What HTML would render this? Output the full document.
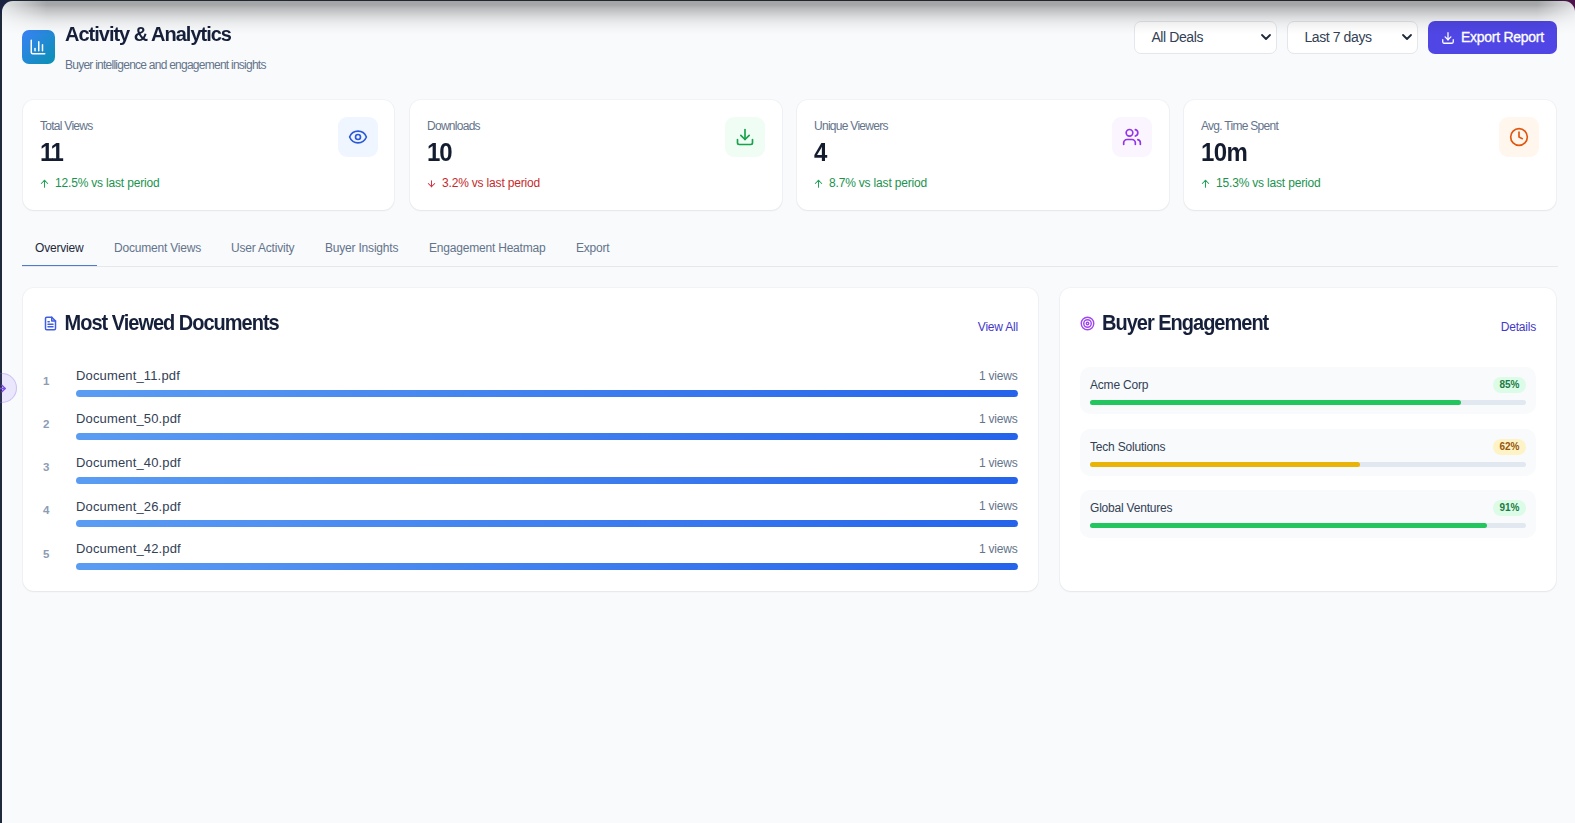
<!DOCTYPE html>
<html lang="en">
<head>
<meta charset="utf-8">
<title>Activity &amp; Analytics</title>
<style>
*{box-sizing:border-box;margin:0;padding:0}
html,body{width:1575px;height:823px;overflow:hidden}
body{font-family:"Liberation Sans",Arial,sans-serif;background:#1e2a3a;color:#1e293b;position:relative}
#topbar{position:absolute;left:0;top:0;width:1575px;height:14px;background:linear-gradient(90deg,#1a2142 0,#1e2835 30px,#22272f 300px,#222528 1545px,#3a1a3c 1560px,#4b1348 1570px)}
.abs{position:absolute}
#app{position:absolute;left:2px;top:1px;width:1573px;height:822px;background:#f8fafc;border-radius:11px 11px 0 0;overflow:hidden}
#topshadow{position:absolute;left:0;top:0;width:100%;height:34px;background:linear-gradient(180deg,rgba(0,0,0,.34) 0,rgba(0,0,0,.33) 4px,rgba(0,0,0,.26) 7px,rgba(0,0,0,.20) 11px,rgba(0,0,0,.137) 15px,rgba(0,0,0,.085) 19px,rgba(0,0,0,.052) 23px,rgba(0,0,0,.028) 27px,rgba(0,0,0,.012) 30px,rgba(0,0,0,0) 34px);-webkit-mask-image:linear-gradient(90deg,rgba(0,0,0,.25) 0,#000 45px,#000 1535px,rgba(0,0,0,.3) 1573px);mask-image:linear-gradient(90deg,rgba(0,0,0,.25) 0,#000 45px,#000 1535px,rgba(0,0,0,.3) 1573px)}
/* all children positioned relative to page (0,0) via wrapper offset */
#pg{position:absolute;left:-2px;top:-1px;width:1575px;height:823px}
.hicon{left:22px;top:30px;width:33px;height:34px;border-radius:7px;background:linear-gradient(135deg,#3b82f6,#0891b2)}
h1{left:65px;top:22px;font-size:20px;line-height:24px;font-weight:700;letter-spacing:-1px;color:#17203a;white-space:nowrap;transform:scaleY(1.05);transform-origin:0 18.9px}
.sub{left:65px;top:57px;font-size:12px;line-height:16px;letter-spacing:-0.75px;color:#64748b;white-space:nowrap}
.sel{top:21px;height:33px;border:1px solid #e3e6ea;border-radius:7px;background:#fff;font-size:14px;line-height:31px;color:#334155;padding-left:16.4px;white-space:nowrap;letter-spacing:-0.4px}
.sel svg{position:absolute;right:4px;top:9.4px}
.btn{left:1428px;top:21px;width:129px;height:33px;border-radius:7px;background:#4f46e5;color:#fff;font-size:14px;line-height:33px;font-weight:400;white-space:nowrap;-webkit-text-stroke:0.3px #fff}
.btn span{position:absolute;left:33px;top:0;letter-spacing:-0.27px}
.btn svg{position:absolute;left:12.5px;top:9.5px}
.card{top:100px;width:372px;height:109.5px;background:#fff;border-radius:11px;box-shadow:0 1px 2px rgba(0,0,0,.055),0 0 0 1px rgba(241,243,246,1)}
.card .lb{position:absolute;left:17px;top:18px;font-size:12px;line-height:16px;letter-spacing:-0.72px;color:#64748b;white-space:nowrap}
.card .val{position:absolute;left:17px;top:38px;font-size:24px;line-height:30px;font-weight:700;color:#141c30;letter-spacing:-1.4px;white-space:nowrap;transform:scaleY(1.04);transform-origin:0 23.3px}
.card .chg{position:absolute;left:17px;top:75px;font-size:12px;line-height:16px;white-space:nowrap;letter-spacing:-0.18px}
.card .chg svg{position:absolute;left:-0.6px;top:3px}
.card .chg span{position:absolute;left:15px;top:0}
.up{color:#1a934e}.dn{color:#c52a2a}
.ib{position:absolute;left:315px;top:17px;width:40px;height:40px;border-radius:9px}
.ib svg{position:absolute;left:10px;top:10px}
.tab{top:240px;font-size:12px;line-height:16px;color:#64748b;white-space:nowrap;letter-spacing:-0.2px}
.tab.on{color:#1e293b}
.tline{left:22px;top:266px;width:1536px;height:1px;background:#e6e8eb}
.tact{left:22px;top:265px;width:75px;height:1px;background:#4f7bd0}
.panel{top:288px;height:303px;background:#fff;border-radius:11px;box-shadow:0 1px 2px rgba(0,0,0,.055),0 0 0 1px rgba(241,243,246,1)}
h2{position:absolute;font-size:20px;line-height:24px;font-weight:700;letter-spacing:-1px;color:#17203a;white-space:nowrap;transform:scaleY(1.06);transform-origin:0 18.9px}
.lnk{position:absolute;font-size:12px;line-height:16px;color:#4338ca;white-space:nowrap;letter-spacing:-0.2px}
.row{position:absolute;left:0;width:1015px;height:43px}
.row .n{position:absolute;left:20px;top:6.5px;font-size:11.5px;line-height:14px;font-weight:700;color:#8d9cb4}
.row .nm{position:absolute;left:53px;top:0;font-size:13px;line-height:18px;color:#334155;letter-spacing:0.15px;white-space:nowrap}
.row .vw{position:absolute;right:20.5px;top:1px;font-size:12px;line-height:16px;color:#64748b;white-space:nowrap;letter-spacing:-0.2px}
.row .bar{position:absolute;left:53px;top:23px;width:942px;height:7px;border-radius:4px;background:linear-gradient(90deg,#5b9cf3,#2563eb)}
.be{position:absolute;left:20px;width:456px;height:47px;border-radius:10px;background:#f8fafc}
.be .nm{position:absolute;left:10px;top:10px;font-size:12px;line-height:16px;color:#334155;white-space:nowrap;letter-spacing:-0.2px}
.be .pill{position:absolute;right:10px;top:10px;width:33px;height:16px;border-radius:8px;font-size:10px;line-height:16px;font-weight:700;text-align:center}
.be .trk{position:absolute;left:10px;top:33px;width:436px;height:5px;border-radius:3px;background:#e2e8f0}
.be .fill{position:absolute;left:0;top:0;height:5px;border-radius:3px}
.g{background:#dcfce7;color:#1c7a45}.y{background:#fef3c7;color:#95580f}
.side{left:-13px;top:373px;width:30px;height:30px;border-radius:50%;background:rgba(139,92,246,.12);border:1px solid rgba(125,100,225,.30)}
</style>
</head>
<body>
<div id="topbar"></div>
<div id="app"><div id="pg">

<div class="abs hicon">
<svg class="abs" style="left:7.2px;top:8px" width="18" height="18" viewBox="0 0 24 24" fill="none" stroke="#fff" stroke-width="2" stroke-linecap="round" stroke-linejoin="round"><path d="M3 3v16a2 2 0 0 0 2 2h16"/><path d="M18 17V9"/><path d="M13 17V5"/><path d="M8 17v-3"/></svg>
</div>
<h1 class="abs">Activity &amp; Analytics</h1>
<div class="abs sub">Buyer intelligence and engagement insights</div>

<div class="abs sel" style="left:1134px;width:143px">All Deals<svg width="12" height="12" viewBox="0 0 12 12" fill="none" stroke="#1e293b" stroke-width="1.8" stroke-linecap="round" stroke-linejoin="round"><path d="M2 4l4 4 4-4"/></svg></div>
<div class="abs sel" style="left:1287px;width:131px">Last 7 days<svg width="12" height="12" viewBox="0 0 12 12" fill="none" stroke="#1e293b" stroke-width="1.8" stroke-linecap="round" stroke-linejoin="round"><path d="M2 4l4 4 4-4"/></svg></div>
<div class="abs btn"><svg width="14" height="14" viewBox="0 0 24 24" fill="none" stroke="#fff" stroke-width="2.2" stroke-linecap="round" stroke-linejoin="round"><path d="M21 15v4a2 2 0 0 1-2 2H5a2 2 0 0 1-2-2v-4"/><path d="M7 10l5 5 5-5"/><path d="M12 15V3"/></svg><span>Export Report</span></div>

<!-- stat cards -->
<div class="abs card" style="left:23px;width:371px">
 <div class="lb">Total Views</div><div class="val">11</div>
 <div class="chg up"><svg width="11" height="11" viewBox="0 0 24 24" fill="none" stroke="#22a35a" stroke-width="2.2" stroke-linecap="round" stroke-linejoin="round"><path d="M12 20V5"/><path d="M5 12l7-7 7 7"/></svg><span>12.5% vs last period</span></div>
 <div class="ib" style="background:#eff6ff"><svg width="20" height="20" viewBox="0 0 24 24" fill="none" stroke="#2a5ad8" stroke-width="2" stroke-linecap="round" stroke-linejoin="round"><path d="M2.062 12.348a1 1 0 0 1 0-.696 10.750 10.750 0 0 1 19.876 0 1 1 0 0 1 0 .696 10.750 10.750 0 0 1-19.876 0"/><circle cx="12" cy="12" r="3"/></svg></div>
</div>
<div class="abs card" style="left:410px">
 <div class="lb">Downloads</div><div class="val" style="letter-spacing:-1.1px">10</div>
 <div class="chg dn"><svg width="11" height="11" viewBox="0 0 24 24" fill="none" stroke="#d03545" stroke-width="2.2" stroke-linecap="round" stroke-linejoin="round"><path d="M12 6v13"/><path d="M19 12l-7 7-7-7"/></svg><span>3.2% vs last period</span></div>
 <div class="ib" style="background:#f0fdf4"><svg width="20" height="20" viewBox="0 0 24 24" fill="none" stroke="#16a34a" stroke-width="2" stroke-linecap="round" stroke-linejoin="round"><path d="M21 15v4a2 2 0 0 1-2 2H5a2 2 0 0 1-2-2v-4"/><path d="M7 10l5 5 5-5"/><path d="M12 15V3"/></svg></div>
</div>
<div class="abs card" style="left:797px">
 <div class="lb">Unique Viewers</div><div class="val">4</div>
 <div class="chg up"><svg width="11" height="11" viewBox="0 0 24 24" fill="none" stroke="#22a35a" stroke-width="2.2" stroke-linecap="round" stroke-linejoin="round"><path d="M12 20V5"/><path d="M5 12l7-7 7 7"/></svg><span>8.7% vs last period</span></div>
 <div class="ib" style="background:#faf5ff"><svg width="20" height="20" viewBox="0 0 24 24" fill="none" stroke="#9333ea" stroke-width="2" stroke-linecap="round" stroke-linejoin="round"><path d="M16 21v-2a4 4 0 0 0-4-4H6a4 4 0 0 0-4 4v2"/><circle cx="9" cy="7" r="4"/><path d="M22 21v-2a4 4 0 0 0-3-3.870"/><path d="M16 3.130a4 4 0 0 1 0 7.750"/></svg></div>
</div>
<div class="abs card" style="left:1184px">
 <div class="lb">Avg. Time Spent</div><div class="val" style="letter-spacing:-0.65px">10m</div>
 <div class="chg up"><svg width="11" height="11" viewBox="0 0 24 24" fill="none" stroke="#22a35a" stroke-width="2.2" stroke-linecap="round" stroke-linejoin="round"><path d="M12 20V5"/><path d="M5 12l7-7 7 7"/></svg><span>15.3% vs last period</span></div>
 <div class="ib" style="background:#fff7ed"><svg width="20" height="20" viewBox="0 0 24 24" fill="none" stroke="#e2560e" stroke-width="2" stroke-linecap="round" stroke-linejoin="round"><circle cx="12" cy="12" r="10"/><path d="M12 6v6l4 2"/></svg></div>
</div>

<!-- tabs -->
<div class="abs tab on" style="left:35px">Overview</div>
<div class="abs tab" style="left:114px">Document Views</div>
<div class="abs tab" style="left:231px">User Activity</div>
<div class="abs tab" style="left:325px">Buyer Insights</div>
<div class="abs tab" style="left:429px">Engagement Heatmap</div>
<div class="abs tab" style="left:576px">Export</div>
<div class="abs tline"></div>
<div class="abs tact"></div>

<!-- left panel -->
<div class="abs panel" style="left:23px;width:1015px">
 <svg class="abs" style="left:20px;top:27.5px" width="15" height="15" viewBox="0 0 24 24" fill="none" stroke="#3f5fe0" stroke-width="2.4" stroke-linecap="round" stroke-linejoin="round"><path d="M14 2H6a2 2 0 0 0-2 2v16a2 2 0 0 0 2 2h12a2 2 0 0 0 2-2V8z"/><path d="M14 2v6h6"/><path d="M16 13H8"/><path d="M16 17H8"/><path d="M10 9H8"/></svg>
 <h2 style="left:41.5px;top:23px">Most Viewed Documents</h2>
 <div class="lnk" style="right:20px;top:31px">View All</div>
 <div class="row" style="top:79px"><div class="n">1</div><div class="nm">Document_11.pdf</div><div class="vw">1 views</div><div class="bar"></div></div>
 <div class="row" style="top:122.2px"><div class="n">2</div><div class="nm">Document_50.pdf</div><div class="vw">1 views</div><div class="bar"></div></div>
 <div class="row" style="top:165.5px"><div class="n">3</div><div class="nm">Document_40.pdf</div><div class="vw">1 views</div><div class="bar"></div></div>
 <div class="row" style="top:208.8px"><div class="n">4</div><div class="nm" style="top:1px">Document_26.pdf</div><div class="vw">1 views</div><div class="bar"></div></div>
 <div class="row" style="top:252px"><div class="n">5</div><div class="nm">Document_42.pdf</div><div class="vw">1 views</div><div class="bar"></div></div>
</div>

<!-- right panel -->
<div class="abs panel" style="left:1060px;width:496px">
 <svg class="abs" style="left:20px;top:28px" width="15" height="15" viewBox="0 0 24 24" fill="none" stroke="#9f48f0" stroke-width="2.3" stroke-linecap="round" stroke-linejoin="round"><circle cx="12" cy="12" r="10"/><circle cx="12" cy="12" r="6"/><circle cx="12" cy="12" r="2"/></svg>
 <h2 style="left:42px;top:23px">Buyer Engagement</h2>
 <div class="lnk" style="right:20px;top:31px">Details</div>
 <div class="be" style="top:79px"><div class="nm">Acme Corp</div><div class="pill g">85%</div><div class="trk"><div class="fill" style="width:85%;background:#22c55e"></div></div></div>
 <div class="be" style="top:141px"><div class="nm">Tech Solutions</div><div class="pill y">62%</div><div class="trk"><div class="fill" style="width:62%;background:#eab308"></div></div></div>
 <div class="be" style="top:202px;height:48px"><div class="nm">Global Ventures</div><div class="pill g">91%</div><div class="trk"><div class="fill" style="width:91%;background:#22c55e"></div></div></div>
</div>


<div id="topshadow" class="abs" style="left:2px;top:1px"></div>
</div></div>
<!-- sidebar toggle -->
<div class="abs side"><svg class="abs" style="left:8px;top:9.2px" width="11" height="11" viewBox="0 0 24 24" fill="none" stroke="#7c4ee6" stroke-width="3" stroke-linecap="round" stroke-linejoin="round"><path d="M2 12h18"/><path d="M13 5l7 7-7 7"/></svg></div>
</body>
</html>
